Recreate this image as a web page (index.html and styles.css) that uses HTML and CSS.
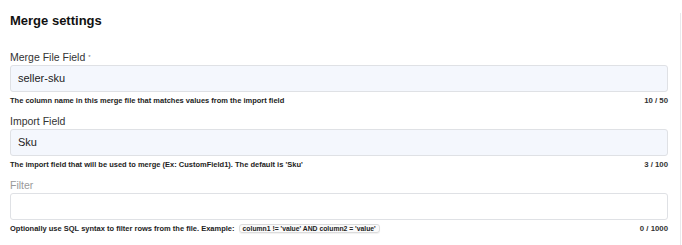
FILE: index.html
```html
<!DOCTYPE html>
<html>
<head>
<meta charset="utf-8">
<link rel="stylesheet" href="styles.css">
</head>
<body>
<div class="panel">
  <h2 class="title">Merge settings</h2>
  <div class="field">
    <label class="label">Merge File Field <span class="req">*</span></label>
    <div class="input filled">seller-sku</div>
    <div class="help"><span>The column name in this merge file that matches values from the import field</span><span class="count">10 / 50</span></div>
  </div>
  <div class="field">
    <label class="label">Import Field</label>
    <div class="input filled">Sku</div>
    <div class="help"><span>The import field that will be used to merge (Ex: CustomField1). The default is 'Sku'</span><span class="count">3 / 100</span></div>
  </div>
  <div class="field">
    <label class="label muted">Filter</label>
    <div class="input"></div>
    <div class="help"><span>Optionally use SQL syntax to filter rows from the file. Example: <code class="code">column1 != 'value' AND column2 = 'value'</code></span><span class="count">0 / 1000</span></div>
  </div>
</div>
</body>
</html>
```
FILE: styles.css
```css
html, body {
  margin: 0;
  padding: 0;
  background: #ffffff;
}
body {
  font-family: "Liberation Sans", Arial, sans-serif;
  color: #222;
  width: 682px;
  height: 245px;
  overflow: hidden;
}
.panel {
  margin-top: 3px;
  width: 681px;
  height: 242px;
  box-sizing: border-box;
  border-right: 1px solid #e9e9ec;
  padding: 0 12px 0 10px;
}
.title {
  margin: 13px 0 0 0;
  font-size: 13px;
  line-height: 16px;
  font-weight: bold;
  color: #111;
}
.field {
  display: flex;
  flex-direction: column;
  margin-bottom: 9px;
}
.title + .field {
  margin-top: 22px;
}
.label {
  font-size: 10.5px;
  line-height: 13px;
  color: #333;
  margin-bottom: 1px;
}
.label.muted {
  color: #9a9a9a;
}
.req {
  font-size: 6px;
  vertical-align: top;
  color: #777;
}
.input {
  height: 27px;
  box-sizing: border-box;
  border: 1px solid #dfe1e5;
  border-radius: 3px;
  background: #ffffff;
  font-size: 11px;
  line-height: 25px;
  padding-left: 7px;
  color: #222;
}
.input.filled {
  background: #f4f7fd;
}
.help {
  margin-top: 4px;
  display: flex;
  justify-content: space-between;
  align-items: center;
  font-size: 7.5px;
  line-height: 10px;
  height: 10px;
  font-weight: bold;
  color: #222;
}
.count {
  font-weight: bold;
  font-size: 7.8px;
  color: #333;
}
.code {
  font-family: "Liberation Sans", Arial, sans-serif;
  font-size: 6.8px;
  font-weight: bold;
  border: 1px solid #dcdcdc;
  border-radius: 3px;
  background: #fafafa;
  padding: 0 3px;
  margin-left: 2px;
  box-shadow: 0 1px 1px rgba(0,0,0,0.06);
}
```
